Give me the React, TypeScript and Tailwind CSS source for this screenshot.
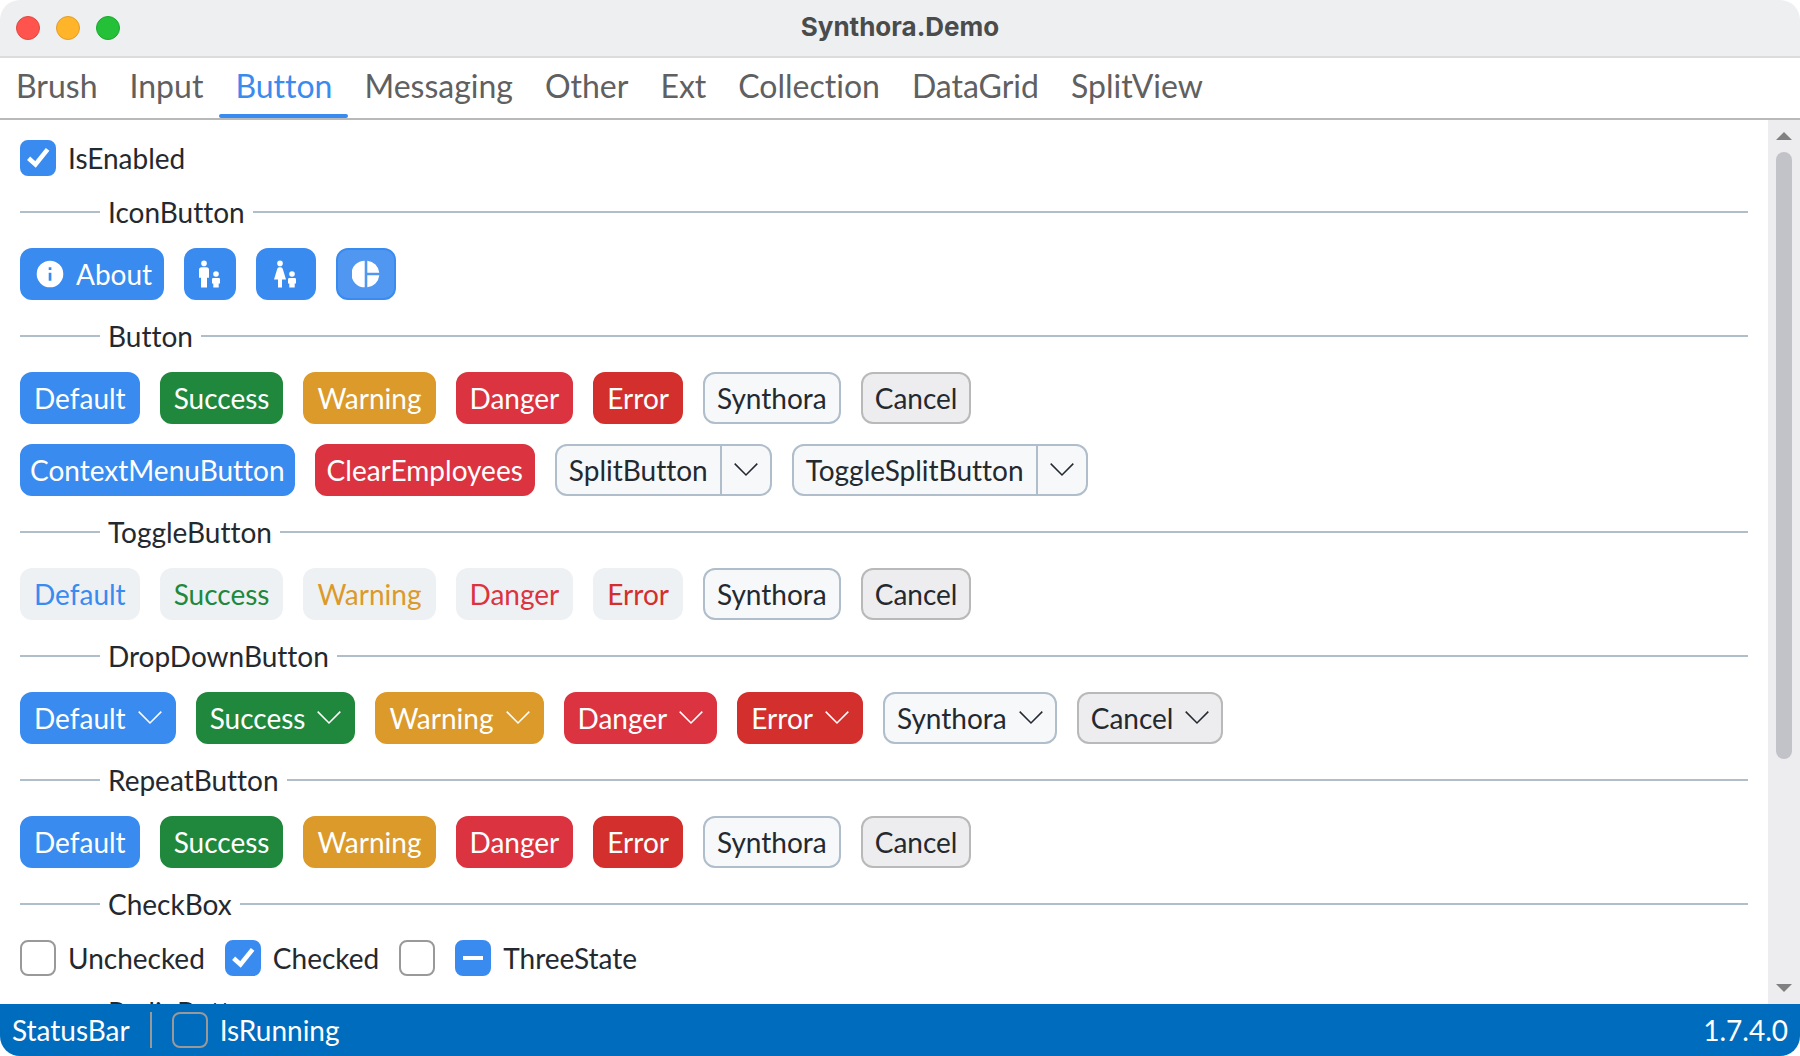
import { useEffect, useRef, useState, type ReactNode } from "react";

const tabs = ["Brush", "Input", "Button", "Messaging", "Other", "Ext", "Collection", "DataGrid", "SplitView"];

const variants = [
  { name: "Default", solid: "bg-[#398bf0] border-[#398bf0] text-white", toggle: "bg-[#eef1f4] border-[#eef1f4] text-[#398bf0]" },
  { name: "Success", solid: "bg-[#20883c] border-[#20883c] text-white", toggle: "bg-[#eef1f4] border-[#eef1f4] text-[#20883c]" },
  { name: "Warning", solid: "bg-[#db9a29] border-[#db9a29] text-white", toggle: "bg-[#eef1f4] border-[#eef1f4] text-[#db9a29]" },
  { name: "Danger", solid: "bg-[#dc3340] border-[#dc3340] text-white", toggle: "bg-[#eef1f4] border-[#eef1f4] text-[#dc3340]" },
  { name: "Error", solid: "bg-[#d32f2d] border-[#d32f2d] text-white", toggle: "bg-[#eef1f4] border-[#eef1f4] text-[#d32f2d]" },
  { name: "Synthora", solid: "bg-[#f6f8fa] border-[#b0bdcb]", toggle: "bg-[#f6f8fa] border-[#b0bdcb]" },
  { name: "Cancel", solid: "bg-[#ededef] border-[#b9b9b9]", toggle: "bg-[#ededef] border-[#b9b9b9]" },
];

function Chevron() {
  return (
    <svg width="24" height="14" viewBox="0 0 24 14" fill="none" stroke="currentColor" strokeWidth="1.5" aria-hidden="true">
      <path d="M0.7 0.6 L12 12 L23.3 0.6" />
    </svg>
  );
}

function Button({ tone, pad = "px-3", label, children }: { tone: string; pad?: string; label?: string; children: ReactNode }) {
  return (
    <button type="button" aria-label={label} className={`flex h-[52px] items-center gap-3 rounded-xl border-2 ${pad} ${tone}`}>
      {children}
    </button>
  );
}

function SplitButton({ children }: { children: string }) {
  return (
    <div className="flex h-[52px] divide-x-2 divide-[#b0bdcb] rounded-xl border-2 border-[#b0bdcb] bg-[#f6f8fa]">
      <button type="button" className="px-3">{children}</button>
      <button type="button" aria-label={`${children} options`} className="px-3">
        <Chevron />
      </button>
    </div>
  );
}

function Header({ children }: { children: string }) {
  return (
    <div className="flex h-[72px] items-center gap-2">
      <div className="h-0.5 w-20 bg-[#b0bec9]" />
      <h2>{children}</h2>
      <div className="h-0.5 flex-1 bg-[#b0bec9]" />
    </div>
  );
}

function Row({ children }: { children: ReactNode }) {
  return <div className="flex items-center gap-5">{children}</div>;
}

function CheckBox({ children, checked = false, mixed = false, label }: { children?: string; checked?: boolean; mixed?: boolean; label?: string }) {
  const ref = useRef<HTMLInputElement>(null);
  useEffect(() => {
    if (ref.current) ref.current.indeterminate = mixed;
  }, [mixed]);
  return (
    <label className="flex items-center gap-3">
      <span className="relative flex size-9">
        <input
          ref={ref}
          type="checkbox"
          defaultChecked={checked}
          aria-label={label}
          className="peer size-9 appearance-none rounded-lg border-2 border-[#999999] checked:border-[#398bf0] checked:bg-[#398bf0] indeterminate:border-[#398bf0] indeterminate:bg-[#398bf0]"
        />
        <svg viewBox="0 0 36 36" fill="none" stroke="white" strokeWidth="4.6" aria-hidden="true" className="pointer-events-none absolute inset-0 hidden peer-checked:block">
          <path d="M8.6 18.2 L15.5 24.4 L27.6 9.4" />
        </svg>
        <svg viewBox="0 0 36 36" stroke="white" strokeWidth="4" aria-hidden="true" className="pointer-events-none absolute inset-0 hidden peer-indeterminate:block">
          <path d="M8 18 H28" />
        </svg>
      </span>
      {children && <span>{children}</span>}
    </label>
  );
}

function InfoIcon() {
  return (
    <svg width="28" height="28" viewBox="0 0 28 28" fill="currentColor" fillRule="evenodd" aria-hidden="true">
      <path d="M14 0.7a13.3 13.3 0 1 0 0 26.6a13.3 13.3 0 1 0 0-26.6z M12.7 7.3h2.7v2.7h-2.7z M12.7 12.7h2.7v8h-2.7z" />
    </svg>
  );
}

function Child() {
  return (
    <>
      <circle cx="20" cy="14" r="2.8" />
      <path d="M17.3 18h5.4a1.3 1.3 0 0 1 1.3 1.3V23.4h-1.3v4.2h-5.4v-4.2H16v-4.1a1.3 1.3 0 0 1 1.3-1.3z" />
    </>
  );
}

function MaleChildIcon() {
  return (
    <svg width="28" height="28" viewBox="0 0 28 28" fill="currentColor" aria-hidden="true">
      <circle cx="8" cy="3.4" r="2.8" />
      <path d="M5.6 7.2h4.8a2.6 2.6 0 0 1 2.6 2.6V17.8h-2v9.8H5v-9.8H3V9.8a2.6 2.6 0 0 1 2.6-2.6z" />
      <Child />
    </svg>
  );
}

function FemaleChildIcon() {
  return (
    <svg width="28" height="28" viewBox="0 0 28 28" fill="currentColor" aria-hidden="true">
      <circle cx="8" cy="3.4" r="2.8" />
      <path d="M7.6 7.2h0.8c1.1 0 2 0.6 2.4 1.7L14 19.6h-4v8H6v-8H2L5.2 8.9C5.6 7.8 6.5 7.2 7.6 7.2z" />
      <Child />
    </svg>
  );
}

function PieIcon() {
  return (
    <svg width="28" height="28" viewBox="0 0 28 28" fill="currentColor" aria-hidden="true">
      <path d="M12.7 0.7v26.6a13.3 13.3 0 0 1 0-26.6z M15.3 0.7a13.3 13.3 0 0 1 12 12h-12z M15.3 15.3h12a13.3 13.3 0 0 1-12 12z" />
    </svg>
  );
}

export default function App() {
  const [active, setActive] = useState("Button");
  return (
    <div className="flex h-screen flex-col overflow-hidden rounded-[20px] bg-white font-['Lato',sans-serif] text-[28px] leading-9 text-[#24292f] [font-variant-ligatures:none]">
      <header className="grid h-[58px] shrink-0 grid-cols-[1fr_auto_1fr] items-center border-b-2 border-[#dcdcdd] bg-[#eeeff1] px-4">
        <div className="flex gap-4">
          <button type="button" aria-label="Close" className="size-6 rounded-full border border-[#e2463f] bg-[#ff544d]" />
          <button type="button" aria-label="Minimize" className="size-6 rounded-full border border-[#e09e28] bg-[#ffb429]" />
          <button type="button" aria-label="Zoom" className="size-6 rounded-full border border-[#17a82e] bg-[#24c138]" />
        </div>
        <h1 className="pb-0.5 font-['Inter',sans-serif] text-[26px] font-bold text-[#4a4b4b]">Synthora.Demo</h1>
      </header>

      <nav role="tablist" className="flex h-[62px] shrink-0 border-b-2 border-[#b9b9b9] text-[32px]">
        {tabs.map((t) => (
          <button
            key={t}
            type="button"
            role="tab"
            aria-selected={t === active}
            onClick={() => setActive(t)}
            className={`relative px-4 pb-1 ${t === active ? "text-[#398bf0]" : "text-[#5f6061]"}`}
          >
            {t}
            {t === active && <span className="absolute inset-x-0 bottom-0 h-1 rounded-full bg-[#398bf0]" />}
          </button>
        ))}
      </nav>

      <div className="flex min-h-0 flex-1">
        <main className="min-w-0 flex-1 overflow-hidden px-5 pt-5">
          <CheckBox checked>IsEnabled</CheckBox>

          <Header>IconButton</Header>
          <Row>
            <Button tone="bg-[#398bf0] border-[#398bf0] text-white" pad="pl-3.5 pr-2.5">
              <InfoIcon />
              <span>About</span>
            </Button>
            <Button tone="bg-[#398bf0] border-[#398bf0] text-white" pad="px-2.5" label="Man with child">
              <MaleChildIcon />
            </Button>
            <Button tone="bg-[#398bf0] border-[#398bf0] text-white" pad="px-3.5" label="Woman with child">
              <FemaleChildIcon />
            </Button>
            <Button tone="bg-[#5097f1] border-[#398bf0] text-white" pad="px-3.5" label="Chart">
              <PieIcon />
            </Button>
          </Row>

          <Header>Button</Header>
          <div className="flex flex-col gap-5">
            <Row>
              {variants.map((v) => (
                <Button key={v.name} tone={v.solid}>{v.name}</Button>
              ))}
            </Row>
            <Row>
              <Button tone="bg-[#398bf0] border-[#398bf0] text-white" pad="px-2">ContextMenuButton</Button>
              <Button tone="bg-[#dc3340] border-[#dc3340] text-white" pad="px-2.5">ClearEmployees</Button>
              <SplitButton>SplitButton</SplitButton>
              <SplitButton>ToggleSplitButton</SplitButton>
            </Row>
          </div>

          <Header>ToggleButton</Header>
          <Row>
            {variants.map((v) => (
              <Button key={v.name} tone={v.toggle}>{v.name}</Button>
            ))}
          </Row>

          <Header>DropDownButton</Header>
          <Row>
            {variants.map((v) => (
              <Button key={v.name} tone={v.solid}>
                <span>{v.name}</span>
                <Chevron />
              </Button>
            ))}
          </Row>

          <Header>RepeatButton</Header>
          <Row>
            {variants.map((v) => (
              <Button key={v.name} tone={v.solid}>{v.name}</Button>
            ))}
          </Row>

          <Header>CheckBox</Header>
          <Row>
            <CheckBox>Unchecked</CheckBox>
            <CheckBox checked>Checked</CheckBox>
            <CheckBox label="Empty" />
            <CheckBox mixed>ThreeState</CheckBox>
          </Row>

          <Header>RadioButton</Header>
        </main>

        <aside className="flex w-8 shrink-0 flex-col items-center bg-[#ededef] py-3 text-[#808080]">
          <svg width="16" height="8" viewBox="0 0 16 8" fill="currentColor" aria-hidden="true">
            <path d="M0 8L8 0L16 8z" />
          </svg>
          <div className="flex w-4 flex-1 flex-col py-3">
            <div className="h-[74%] rounded-full bg-[#c2c2c9]" />
          </div>
          <svg width="16" height="8" viewBox="0 0 16 8" fill="currentColor" aria-hidden="true">
            <path d="M0 0L8 8L16 0z" />
          </svg>
        </aside>
      </div>

      <footer className="flex h-[52px] shrink-0 items-center gap-5 bg-[#006cbe] px-3 text-white">
        <span>StatusBar</span>
        <div className="h-9 w-0.5 bg-[#999999]" />
        <CheckBox>IsRunning</CheckBox>
        <span className="ml-auto">1.7.4.0</span>
      </footer>
    </div>
  );
}
